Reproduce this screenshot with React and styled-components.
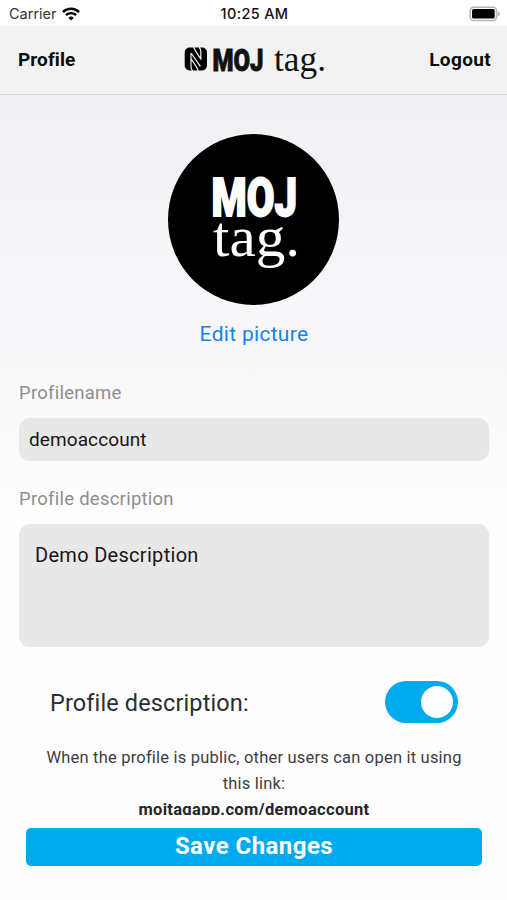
import React, { useState } from "react";
import styled, { createGlobalStyle } from "styled-components";

const GlobalStyle = createGlobalStyle`
  * {
    box-sizing: border-box;
  }

  body {
    margin: 0;
    background: #fefefe;
    font-family: Roboto, "Liberation Sans", sans-serif;
    color: #111;
  }
`;

const Screen = styled.div`
  display: flex;
  flex-direction: column;
  width: 100%;
  height: 900px;
  overflow: hidden;
`;

const StatusBar = styled.div`
  display: grid;
  grid-template-columns: 1fr auto 1fr;
  align-items: center;
  height: 26px;
  padding: 1px 7px 0 9px;
  background: #fff;
  font-family: Inter, sans-serif;

  svg {
    display: block;
  }
`;

const Carrier = styled.div`
  display: flex;
  align-items: center;
  gap: 5px;
  font-size: 14.5px;
  color: #333;
`;

const Clock = styled.div`
  font-size: 14.5px;
  font-weight: 500;
  letter-spacing: 0.35px;
  color: #111;
`;

const Battery = styled.div`
  justify-self: end;
`;

const Header = styled.header`
  display: grid;
  grid-template-columns: 1fr auto 1fr;
  align-items: center;
  height: 69px;
  padding: 0 16px 2px 18px;
  background: #f2f2f2;
  border-bottom: 1px solid #d8d8da;

  svg {
    display: block;
    margin-top: 5px;
    overflow: visible;
  }
`;

const HeaderButton = styled.button`
  justify-self: ${(props) => props.$side};
  padding: 0;
  border: 0;
  background: none;
  font-family: inherit;
  font-size: 19px;
  font-weight: 700;
  letter-spacing: ${(props) => props.$spacing}px;
  color: #0c0c0c;
  cursor: pointer;
`;

const Content = styled.main`
  display: flex;
  flex-direction: column;
  height: 720px;
  padding: 39px 18px 0 19px;
  overflow: hidden;
  background: linear-gradient(#f0f0f5, #fefefe 60%);
`;

const Avatar = styled.div`
  align-self: center;
  width: 171px;
  height: 171px;
  margin-right: 1px;
  border-radius: 50%;
  background: #000;

  svg {
    display: block;
  }
`;

const EditPicture = styled.button`
  align-self: center;
  height: 28px;
  margin-top: 17px;
  padding: 0;
  border: 0;
  background: none;
  font-family: inherit;
  font-size: 21px;
  letter-spacing: 0.3px;
  color: #1482f4;
  cursor: pointer;
`;

const Label = styled.label`
  height: 24px;
  margin-top: ${(props) => props.$top}px;
  font-size: 18.5px;
  line-height: 24px;
  letter-spacing: 0.25px;
  color: #8e8e8f;
`;

const Input = styled.input`
  height: 43px;
  flex-shrink: 0;
  margin-top: 13px;
  padding: 0 10px;
  border: 0;
  border-radius: 11px;
  outline: 0;
  background: #e8e8e8;
  font-family: inherit;
  font-size: 19px;
  letter-spacing: 0.1px;
  color: #171717;
`;

const TextArea = styled.textarea`
  height: 123px;
  flex-shrink: 0;
  margin-top: 13px;
  padding: 19px 16px;
  border: 0;
  border-radius: 11px;
  outline: 0;
  resize: none;
  background: #e8e8e8;
  font-family: inherit;
  font-size: 20px;
  line-height: 24px;
  letter-spacing: 0.3px;
  color: #171717;
`;

const PublicRow = styled.div`
  display: flex;
  align-items: center;
  justify-content: space-between;
  flex-shrink: 0;
  height: 42px;
  margin-top: 34px;
  padding: 2px 31px 0;
  font-size: 23.5px;
  letter-spacing: 0.12px;
  color: #2c2d30;
`;

const Toggle = styled.button`
  display: flex;
  align-items: center;
  justify-content: ${(props) => (props.$on ? "flex-end" : "flex-start")};
  width: 73px;
  height: 42px;
  margin-top: -2px;
  padding: 0 5px;
  border: 0;
  border-radius: 21px;
  background: ${(props) => (props.$on ? "#00aaee" : "#ccc")};
  cursor: pointer;
`;

const Knob = styled.span`
  width: 32px;
  height: 32px;
  border-radius: 50%;
  background: #fff;
`;

const Hint = styled.p`
  margin: 22px 20px 0;
  font-size: 16.5px;
  line-height: 26px;
  letter-spacing: 0.2px;
  text-align: center;
  color: #3d3d40;

  strong {
    display: block;
    letter-spacing: 0.3px;
    color: #252528;
  }
`;

const Footer = styled.footer`
  padding: 13px 25px 0 26px;
`;

const SaveButton = styled.button`
  display: block;
  width: 100%;
  height: 38px;
  padding: 0 0 2px;
  border: 0;
  border-radius: 5px;
  background: #00aaee;
  font-family: inherit;
  font-size: 24px;
  font-weight: 700;
  letter-spacing: 0.45px;
  color: #fff;
  cursor: pointer;
`;

const LogoText = styled.text`
  font-family: ${(props) =>
    props.$serif ? '"Liberation Serif", serif' : "Roboto, sans-serif"};
  font-weight: ${(props) => (props.$serif ? 400 : 900)};
  fill: currentColor;
  stroke: currentColor;
`;

function WifiIcon() {
  return (
    <svg width="18" height="14" viewBox="0 0 18 14" fill="none" stroke="#000">
      <path d="M0.9 5.2a11.5 11.5 0 0 1 16.2 0" strokeWidth="2.5" />
      <path d="M3.9 8.2a7.2 7.2 0 0 1 10.2 0" strokeWidth="2.4" />
      <path d="M9 13.6l-2.7-2.7a3.8 3.8 0 0 1 5.4 0z" fill="#000" stroke="none" />
    </svg>
  );
}

function BatteryIcon() {
  return (
    <svg width="31" height="16" viewBox="0 0 31 16">
      <rect x="1.2" y="1.2" width="26.3" height="13.2" rx="3.5" fill="#fff" stroke="#b5b5b5" strokeWidth="1.5" />
      <rect x="3" y="3" width="22.7" height="9.6" rx="1.6" fill="#000" />
      <path d="M28.8 5.3v5q2-0.8 2-2.5t-2-2.5z" fill="#aaa" />
    </svg>
  );
}

function HeaderLogo() {
  return (
    <svg width="142" height="42" viewBox="185 41 142 42">
      <rect x="185.7" y="47.6" width="22.3" height="22.8" rx="4.8" fill="#000" />
      <path
        d="M194.6 46.8Q196.2 51.4 201.8 58.8V51.6Q201.8 49.4 200.2 47.2M199.4 71.2Q197.8 66.4 192 58.8V53.6M192 53V66.4Q192 68.6 193.6 70.8M192 53L201.4 66.4"
        fill="none"
        stroke="#f2f2f2"
        strokeWidth="1.2"
      />
      <LogoText x="213.5" y="70.6" fontSize="32" textLength="51" lengthAdjust="spacingAndGlyphs" strokeWidth="0.9">
        MOJ
      </LogoText>
      <LogoText $serif x="275" y="71" fontSize="35" textLength="52" lengthAdjust="spacingAndGlyphs" strokeWidth="0">
        tag.
      </LogoText>
    </svg>
  );
}

function AvatarLogo() {
  return (
    <svg width="171" height="171" viewBox="168 134 171 171" color="#fff">
      <LogoText x="211.5" y="215.8" fontSize="53" textLength="85.5" lengthAdjust="spacingAndGlyphs" strokeWidth="1.8">
        MOJ
      </LogoText>
      <LogoText $serif x="213" y="256" fontSize="56" textLength="87" lengthAdjust="spacingAndGlyphs" strokeWidth="0">
        tag.
      </LogoText>
    </svg>
  );
}

function App() {
  const [name, setName] = useState("demoaccount");
  const [description, setDescription] = useState("Demo Description");
  const [isPublic, setIsPublic] = useState(true);

  return (
    <Screen>
      <GlobalStyle />
      <StatusBar>
        <Carrier>
          Carrier <WifiIcon />
        </Carrier>
        <Clock>10:25 AM</Clock>
        <Battery>
          <BatteryIcon />
        </Battery>
      </StatusBar>

      <Header>
        <HeaderButton $side="start" $spacing={0.1}>Profile</HeaderButton>
        <HeaderLogo />
        <HeaderButton $side="end" $spacing={0.35}>Logout</HeaderButton>
      </Header>

      <Content>
        <Avatar>
          <AvatarLogo />
        </Avatar>
        <EditPicture>Edit picture</EditPicture>

        <Label htmlFor="name" $top={35}>Profilename</Label>
        <Input id="name" value={name} onChange={(e) => setName(e.target.value)} />

        <Label htmlFor="description" $top={26}>Profile description</Label>
        <TextArea
          id="description"
          value={description}
          onChange={(e) => setDescription(e.target.value)}
        />

        <PublicRow>
          <span>Profile description:</span>
          <Toggle $on={isPublic} onClick={() => setIsPublic(!isPublic)}>
            <Knob />
          </Toggle>
        </PublicRow>

        <Hint>
          When the profile is public, other users can open it using this link:
          <strong>mojtagapp.com/{name}</strong>
        </Hint>
      </Content>

      <Footer>
        <SaveButton>Save Changes</SaveButton>
      </Footer>
    </Screen>
  );
}

export default App;
